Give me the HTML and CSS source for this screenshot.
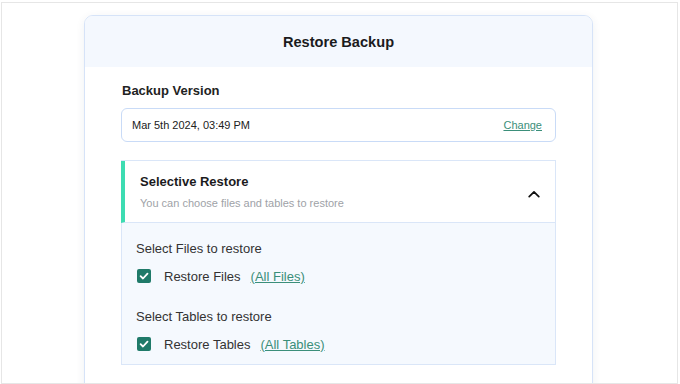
FILE: index.html
```html
<!DOCTYPE html>
<html>
<head>
<meta charset="utf-8">
<link rel="stylesheet" href="styles.css">
</head>
<body>
<div class="frame">
  <div class="card">
    <div class="card-header">Restore Backup</div>
    <div class="card-body">
      <div class="label">Backup Version</div>
      <div class="version-box">
        <span class="version-date">Mar 5th 2024, 03:49 PM</span>
        <a class="link change" href="#">Change</a>
      </div>
      <div class="panel">
        <div class="panel-head">
          <div class="panel-titles">
            <div class="panel-title">Selective Restore</div>
            <div class="panel-sub">You can choose files and tables to restore</div>
          </div>
          <svg class="chevron" width="12" height="8" viewBox="0 0 12 8"><path d="M1.2 6.6 L6 1.8 L10.8 6.6" fill="none" stroke="#111" stroke-width="1.7" stroke-linecap="round" stroke-linejoin="round"/></svg>
        </div>
        <div class="panel-body">
          <div class="group-title">Select Files to restore</div>
          <div class="check-row">
            <span class="checkbox"><svg width="14" height="14" viewBox="0 0 14 14"><path d="M3.6 7.2 L6 9.5 L10.5 4.6" fill="none" stroke="#fff" stroke-width="1.8" stroke-linecap="round" stroke-linejoin="round"/></svg></span>
            <span class="check-label">Restore Files</span>
            <a class="link" href="#">(All Files)</a>
          </div>
          <div class="group-title second">Select Tables to restore</div>
          <div class="check-row">
            <span class="checkbox"><svg width="14" height="14" viewBox="0 0 14 14"><path d="M3.6 7.2 L6 9.5 L10.5 4.6" fill="none" stroke="#fff" stroke-width="1.8" stroke-linecap="round" stroke-linejoin="round"/></svg></span>
            <span class="check-label">Restore Tables</span>
            <a class="link" href="#">(All Tables)</a>
          </div>
        </div>
      </div>
    </div>
  </div>
</div>
</body>
</html>
```
FILE: styles.css
```css
html, body {
  margin: 0;
  padding: 0;
  background: #fff;
  font-family: "Liberation Sans", Arial, Helvetica, sans-serif;
  color: #1d1d1f;
}
.frame {
  box-sizing: border-box;
  margin: 2px 2px 0 1px;
  height: 382px;
  border: 1px solid #e6e6e6;
  overflow: hidden;
}
.card {
  box-sizing: border-box;
  width: 509px;
  margin: 12px 0 0 82px;
  border: 1px solid #d6e3f8;
  border-radius: 9px;
  background: #fff;
  box-shadow: 0 2px 10px rgba(30, 50, 90, 0.07);
  height: 400px;
}
.card-header {
  height: 51px;
  display: flex;
  align-items: center;
  justify-content: center;
  background: #f4f8fe;
  border-radius: 8px 8px 0 0;
  font-size: 14.6px;
  font-weight: bold;
  color: #1b1b1d;
}
.card-body {
  padding: 16px 36px 0 36px;
}
.label {
  font-size: 13px;
  line-height: 16px;
  font-weight: bold;
  color: #222;
  padding-left: 1px;
}
.version-box {
  box-sizing: border-box;
  margin-top: 9px;
  height: 34px;
  border: 1px solid #c9dbf7;
  border-radius: 6px;
  display: flex;
  align-items: center;
  justify-content: space-between;
  padding: 0 13px 0 10px;
}
.version-date {
  font-size: 11px;
  color: #222;
}
.link {
  color: #3b8f7a;
  text-decoration: underline;
  font-size: 13px;
}
.change {
  font-size: 11px;
}
.panel {
  margin-top: 18px;
  border: 1px solid #dae6f8;
}
.panel-head {
  display: flex;
  align-items: center;
  justify-content: space-between;
  border-left: 4px solid #3ddcb2;
  margin-left: -1px;
  padding: 13px 15px 12px 15px;
  background: #fff;
  border-bottom: 1px solid #dae6f8;
}
.panel-title {
  font-size: 13px;
  line-height: 16px;
  font-weight: bold;
  color: #1b1b1d;
}
.panel-sub {
  margin-top: 6px;
  font-size: 11px;
  line-height: 14px;
  color: #9ea2a7;
}
.chevron {
  margin-top: 3px;
}
.panel-body {
  background: #f5f9fe;
  padding: 18px 14px 12px 14px;
}
.group-title {
  font-size: 13px;
  line-height: 16px;
  color: #333;
}
.group-title.second {
  margin-top: 25px;
}
.check-row {
  margin-top: 11px;
  display: flex;
  align-items: center;
  height: 16px;
  font-size: 13px;
}
.checkbox {
  width: 14px;
  height: 14px;
  border-radius: 2px;
  background: #1f7a69;
  display: flex;
  margin-left: 1px;
}
.check-label {
  margin-left: 13px;
  margin-right: 10px;
  color: #333;
}
```
